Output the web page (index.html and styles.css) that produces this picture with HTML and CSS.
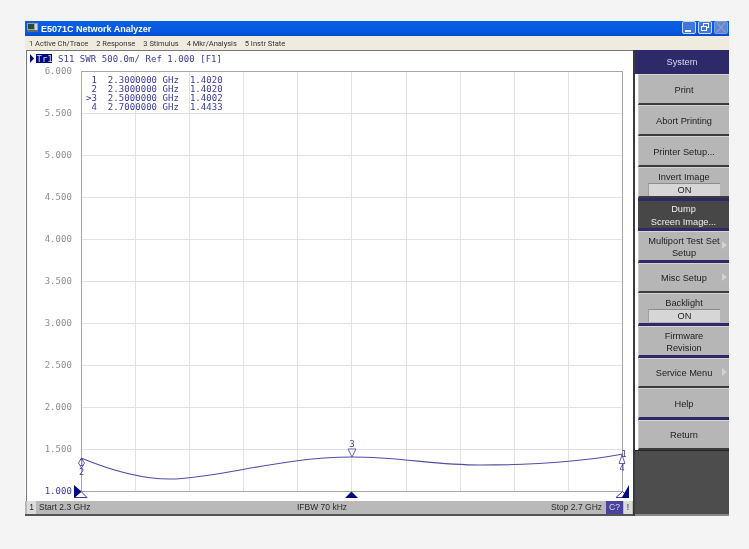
FILE: index.html
```html
<!DOCTYPE html>
<html lang="en">
<head>
<meta charset="utf-8">
<title>E5071C Network Analyzer</title>
<link rel="stylesheet" href="styles.css">
</head>
<body>
<div class="window">
  <header class="titlebar">
    <svg class="app-icon" width="11" height="9" viewBox="0 0 11 9"><rect width="11" height="9" fill="#9aa59a"/><rect x="1" y="1" width="6" height="5" fill="#2c4a34"/><rect x="8" y="1" width="2" height="6" fill="#d5d5d5"/><rect y="7" width="11" height="2" fill="#5f6a6a"/></svg>
    <span class="title">E5071C Network Analyzer</span>
    <div class="winbtns">
      <span class="winbtn"><svg width="14" height="13" viewBox="0 0 14 13"><rect x="3" y="9" width="6" height="2" fill="#fff"/></svg></span>
      <span class="winbtn"><svg width="14" height="13" viewBox="0 0 14 13" fill="none" stroke="#fff"><rect x="5.5" y="2.5" width="5" height="4"/><rect x="3.5" y="5.5" width="5" height="4" fill="#3f77e0"/></svg></span>
      <span class="winbtn winbtn--off"><svg width="14" height="13" viewBox="0 0 14 13" fill="none" stroke="#8d9cc4" stroke-width="1.4"><path d="M3 2l8 9M11 2l-8 9"/></svg></span>
    </div>
  </header>
  <nav class="menubar">
    <span>1 Active Ch/Trace</span>
    <span>2 Response</span>
    <span>3 Stimulus</span>
    <span>4 Mkr/Analysis</span>
    <span>5 Instr State</span>
  </nav>
  <div class="body">
    <main class="left">
      <svg class="chart" width="608" height="451" viewBox="25 50 608 451">
        <rect x="25" y="50" width="608" height="451" fill="#fff"/>
        <path class="frame-top" d="M27 50.5H633M26.5 50V501"/>
        <path class="tr-arrow" d="M30 54l4 4.5-4 4.5z"/>
        <rect class="tr-box" x="36" y="54" width="16" height="9"/>
        <text class="tr-label" x="36.5" y="61.5">Tr1</text>
        <text class="mono blue" x="58" y="61.5">S11 SWR 500.0m/ Ref 1.000 [F1]</text>

        <path class="grid" d="M135.500 71V491M189.500 71V491M243.500 71V491M297.500 71V491M351.500 71V491M406.500 71V491M460.500 71V491M514.500 71V491M568.500 71V491M81 113.500H623M81 155.500H623M81 197.500H623M81 239.500H623M81 281.500H623M81 323.500H623M81 365.500H623M81 407.500H623M81 449.500H623"/>
        <rect class="plot" x="81.500" y="71.500" width="541" height="420"/>

        <text class="mono axis" x="72" y="74">6.000</text>
        <text class="mono axis" x="72" y="116">5.500</text>
        <text class="mono axis" x="72" y="158">5.000</text>
        <text class="mono axis" x="72" y="200">4.500</text>
        <text class="mono axis" x="72" y="242">4.000</text>
        <text class="mono axis" x="72" y="284">3.500</text>
        <text class="mono axis" x="72" y="326">3.000</text>
        <text class="mono axis" x="72" y="368">2.500</text>
        <text class="mono axis" x="72" y="410">2.000</text>
        <text class="mono axis" x="72" y="452">1.500</text>
        <text class="mono axis blue" x="72" y="494">1.000</text>

        <text class="mono blue pre" x="86" y="83"> 1  2.3000000 GHz  1.4020</text>
        <text class="mono blue pre" x="86" y="92"> 2  2.3000000 GHz  1.4020</text>
        <text class="mono blue pre" x="86" y="101">&gt;3  2.5000000 GHz  1.4002</text>
        <text class="mono blue pre" x="86" y="110"> 4  2.7000000 GHz  1.4433</text>

        <path class="trace" d="M81 458C110 470 140 479 170 479C215 479 280 457 352 457C400 457 435 465 480 465C530 465 580 462 623 454"/>

        <path class="marker" d="M81.500 458L84.500 463L81.500 468L78.500 463Z"/>
        <text class="mark-num" x="81.500" y="466">1</text>
        <text class="mark-num" x="81.500" y="474.500">2</text>
        <path class="marker" d="M348 449H356L352 457Z"/>
        <text class="mark-num" x="352" y="447">3</text>
        <path class="marker" d="M622 455L625 463.500H619Z"/>
        <text class="mark-num" x="624" y="457">1</text>
        <text class="mark-num" x="622" y="471">4</text>

        <path class="tri-outline" d="M81 491.500L87 497.500H74.500Z"/>
        <path class="tri-solid" d="M74 485L81.500 491.500L74 498Z"/>
        <path class="tri-solid" d="M351.500 491.500L358 498H345Z"/>
        <path class="tri-outline" d="M622.500 491.500L629 497.500H616Z"/>
        <path class="tri-solid" d="M629 485V498H621.500Z"/>
      </svg>
      <footer class="status">
        <span class="st-cell">1</span>
        <span class="st-start">Start 2.3 GHz</span>
        <span class="st-mid">IFBW 70 kHz</span>
        <span class="st-stop">Stop 2.7 GHz</span>
        <span class="st-c">C?</span>
        <span class="st-i">!</span>
      </footer>
    </main>
    <aside class="panel">
      <div class="panel-head">System</div>
      <div class="key">Print</div>
      <div class="key">Abort Printing</div>
      <div class="key">Printer Setup...</div>
      <div class="key key--toggle">Invert Image<span class="field">ON</span></div>
      <div class="key key--active">Dump<br>Screen Image...</div>
      <div class="key key--nav key--arrow">Multiport Test Set<br>Setup</div>
      <div class="key key--short key--arrow">Misc Setup</div>
      <div class="key key--toggle key--nav key--tall">Backlight<span class="field">ON</span></div>
      <div class="key key--nav">Firmware<br>Revision</div>
      <div class="key key--short key--arrow">Service Menu</div>
      <div class="key key--nav">Help</div>
      <div class="key key--short">Return</div>
      <div class="panel-fill"></div>
    </aside>
  </div>
</div>
</body>
</html>
```
FILE: styles.css
```css
* { box-sizing: border-box; }
html, body { margin: 0; height: 100%; }
body {
  background: #f4f4f4;
  padding: 21px 20px 0 25px;
  font-family: "Liberation Sans", Arial, sans-serif;
  color: #222;
}
.window { width: 704px; height: 495px; display: flex; flex-direction: column; filter: blur(0.4px); }

.titlebar {
  height: 15px;
  flex: none;
  display: flex;
  align-items: center;
  padding-left: 2px;
  background: linear-gradient(#0a5fe2, #0257e0 80%, #0a4bc0);
  color: #fff;
}
.app-icon { margin-right: 3px; margin-top: -2px; }
.title { font-size: 9px; font-weight: 700; }
.winbtns { margin-left: auto; display: flex; gap: 2px; padding-right: 1px; align-self: flex-start; }
.winbtn {
  width: 14px; height: 13px;
  border-radius: 2px;
  border: 1px solid #c9d8f5;
  background: #3f77e0;
  display: flex;
}
.winbtn svg { margin: -1px; flex: none; }
.winbtn--off { background: #5d86d6; border-color: #7e9ada; }

.menubar {
  height: 14px;
  flex: none;
  display: flex;
  align-items: center;
  gap: 8px;
  padding-left: 4px;
  background: #efecdf;
  font-family: Roboto, "Liberation Sans", sans-serif;
  font-size: 7.500px;
  color: #333;
}

.body { display: flex; flex: 1; min-height: 0; }
.left { width: 608px; flex: none; display: flex; flex-direction: column; background: #fff; }
.chart { display: block; flex: none; }
.frame-top { fill: none; stroke: #777; stroke-width: 1; }
.tr-arrow { fill: #000a80; }
.tr-box { fill: #000a80; }
.tr-label { font: 9px "DejaVu Sans Mono", monospace; fill: #d8d8f0; }
.mono { font: 9px "DejaVu Sans Mono", monospace; letter-spacing: 0.05px; }
.blue { fill: #3a3a9e; }
.axis { fill: #8e8e8e; text-anchor: end; }
.axis.blue { fill: #3a3a9e; }
.pre { white-space: pre; }
.grid { fill: none; stroke: #e2e2e2; stroke-width: 1; }
.plot { fill: none; stroke: #a8a8a8; stroke-width: 1; }
.trace { fill: none; stroke: #4e4ea6; stroke-width: 1.1; }
.marker { fill: #fff; stroke: #3a3a9e; stroke-width: 0.8; }
.mark-num { font: 8.5px "DejaVu Sans Mono", monospace; fill: #3a3a9e; text-anchor: middle; }
.tri-solid { fill: #000a80; }
.tri-outline { fill: #fff; stroke: #3a3a9e; stroke-width: 1; }

.status {
  height: 15px;
  flex: none;
  display: flex;
  align-items: flex-start;
  padding-left: 2px;
  background: #b9b9b9;
  border-bottom: 2px solid #555;
  font-size: 8.5px;
  line-height: 13px;
  color: #2a2a2a;
}
.st-cell { width: 9px; height: 13px; background: #dcdcdc; text-align: center; margin-right: 3px; }
.st-start { width: 258px; }
.st-mid { width: 254px; }
.st-stop { width: 55px; white-space: nowrap; }
.st-c { width: 17px; height: 13px; background: #4a429c; color: #dcdcf0; text-align: center; }
.st-i { width: 8px; height: 13px; margin-left: 1px; background: #dcdcdc; text-align: center; }

.panel {
  width: 96px;
  flex: none;
  display: flex;
  flex-direction: column;
  background: #fff;
  border-left: 2px solid #3a3a3a;
  font-size: 9.250px;
}
.panel-head {
  height: 24px;
  flex: none;
  background: #2e2a6a;
  color: #d6d6f0;
  display: flex;
  align-items: center;
  justify-content: center;
  padding-bottom: 1px;
}
.key {
  position: relative;
  height: 31px;
  flex: none;
  margin-left: 3px;
  padding-top: 2px;
  display: flex;
  flex-direction: column;
  align-items: center;
  justify-content: center;
  text-align: center;
  line-height: 12.500px;
  background: #b6b6b6;
  border-top: 1px solid #d4d4d4;
  border-left: 1px solid #d0d0d0;
  border-bottom: 2px solid #3c3c3c;
}
.key--short { height: 30px; }
.key--nav { height: 32px; border-bottom: 3px solid #2e2a6a; }
.key--tall { height: 33px; }
.key--active {
  height: 33px;
  background: #474747;
  color: #eee;
  border: 0;
  border-top: 3px solid #2e2a6a;
  border-bottom: 3px solid #2e2a6a;
}
.key--toggle { justify-content: flex-start; padding-top: 4px; line-height: 11px; }
.key--arrow::after {
  content: "";
  position: absolute;
  right: 2px;
  top: 50%;
  margin-top: -5px;
  border-left: 5px solid #d2d2d2;
  border-top: 4px solid transparent;
  border-bottom: 4px solid transparent;
}
.field {
  width: 72px;
  height: 13px;
  flex: none;
  background: #d6d6d6;
  border-top: 1px solid #8c8c8c;
  border-left: 1px solid #a0a0a0;
  line-height: 12px;
}
.panel-fill { flex: 1; background: #4d4d4d; border-top: 1px solid #222; border-bottom: 2px solid #888; }
```
